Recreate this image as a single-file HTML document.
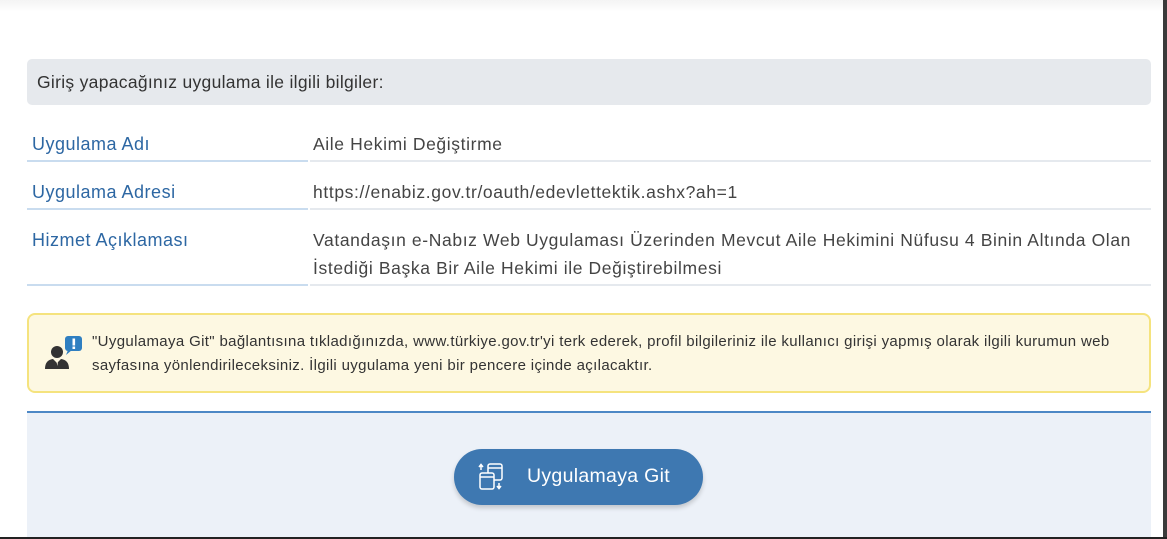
<!DOCTYPE html>
<html><head><meta charset="utf-8"><style>
*{margin:0;padding:0;box-sizing:border-box}
body{width:1167px;height:539px;background:#fff;font-family:"Liberation Sans",sans-serif;position:relative;overflow:hidden}
.topshade{position:absolute;left:0;top:0;width:1167px;height:12px;background:linear-gradient(#f4f4f4,#fff)}
.rb{position:absolute;right:0;top:0;width:4px;height:539px;background:#3a3a3a}
.bb{position:absolute;left:0;bottom:0;width:1167px;height:2px;background:#222}
.hdr{position:absolute;left:27px;top:59px;width:1124px;height:46px;background:#e6e9ed;border-radius:5px;font-size:17.5px;letter-spacing:0.3px;color:#333;padding:13px 0 0 10px}
.lab{position:absolute;left:27px;width:281px;font-size:18px;letter-spacing:0.5px;color:#2d67a3;padding-left:5px;padding-top:3px;border-bottom:2px solid #c9dcef}
.val{position:absolute;left:310px;width:841px;font-size:17.5px;letter-spacing:0.62px;color:#444;padding-left:3px;border-bottom:2px solid #e5e9ee;line-height:28px;padding-top:1px}
.alert{position:absolute;left:27px;top:313px;width:1124px;height:80px;background:#fdf8e2;border:2px solid #f5e37e;border-radius:8px;font-size:15px;letter-spacing:0.35px;color:#333;line-height:24px;padding:15px 0 0 63px}
.line{position:absolute;left:27px;top:411px;width:1124px;height:2px;background:#4d88c6}
.panel{position:absolute;left:27px;top:413px;width:1124px;height:124px;background:#ecf1f8}
.btn{position:absolute;left:454px;top:449px;width:249px;height:56px;border-radius:28px;background:#3e78b1;box-shadow:0 3px 5px rgba(0,0,0,.18);color:#fff;font-size:19.5px;letter-spacing:0.3px}
</style></head><body>
<div class="topshade"></div>
<div class="hdr">Giriş yapacağınız uygulama ile ilgili bilgiler:</div>
<div class="lab" style="top:131px;height:31px">Uygulama Adı</div>
<div class="val" style="top:129px;height:33px">Aile Hekimi Değiştirme</div>
<div class="lab" style="top:179px;height:31px">Uygulama Adresi</div>
<div class="val" style="top:177px;height:33px">https://enabiz.gov.tr/oauth/edevlettektik.ashx?ah=1</div>
<div class="lab" style="top:227px;height:59px">Hizmet Açıklaması</div>
<div class="val" style="top:225px;height:61px">Vatandaşın e-Nabız Web Uygulaması Üzerinden Mevcut Aile Hekimini Nüfusu 4 Binin Altında Olan İstediği Başka Bir Aile Hekimi ile Değiştirebilmesi</div>
<div class="alert">
<svg style="position:absolute;left:14px;top:20px" width="40" height="40" viewBox="0 0 40 40">
<rect x="22" y="1" width="17" height="15" rx="3" fill="#2f7fc1"/><path d="M25 15 L23 20 L29 15Z" fill="#2f7fc1"/>
<rect x="29.5" y="3.5" width="2.6" height="7" fill="#fff"/><rect x="29.5" y="11.5" width="2.6" height="2.5" fill="#fff"/>
<circle cx="14" cy="17" r="6" fill="#333"/><path d="M2 34 Q2 25 10 24 L14 28 L18 24 Q26 25 26 34 Z" fill="#333"/><path d="M13 25 L15 25 L14.5 31Z" fill="#fdf8e2"/>
</svg>
"Uygulamaya Git" bağlantısına tıkladığınızda, www.türkiye.gov.tr'yi terk ederek, profil bilgileriniz ile kullanıcı girişi yapmış olarak ilgili kurumun web sayfasına yönlendirileceksiniz. İlgili uygulama yeni bir pencere içinde açılacaktır.</div>
<div class="line"></div>
<div class="panel"></div>
<div class="btn">
<svg style="position:absolute;left:22px;top:12px" width="32" height="32" viewBox="0 0 32 32" fill="none" stroke="#fff" stroke-width="1.5">
<rect x="12" y="3" width="14" height="16" rx="2"/><line x1="12" y1="7" x2="26" y2="7"/>
<rect x="4" y="12" width="14" height="16" rx="2" fill="#3e78b1"/><line x1="4" y1="16" x2="18" y2="16"/>
<path d="M5 9 V4 M3 6 L5 3.5 L7 6"/><path d="M23 22 V27 M21 25 L23 27.5 L25 25"/>
</svg>
<span style="position:absolute;left:73px;top:16px">Uygulamaya Git</span></div>
<div class="rb"></div><div class="bb"></div>
</body></html>
